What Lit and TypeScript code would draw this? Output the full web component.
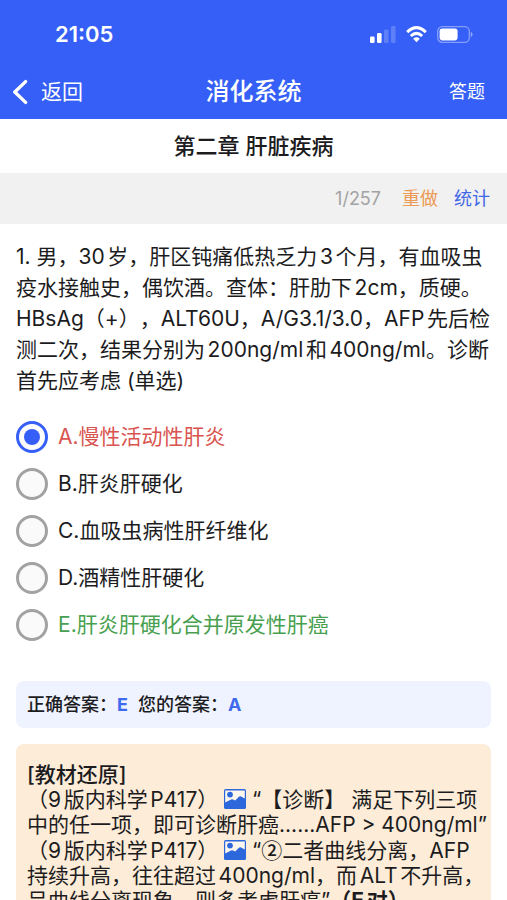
import { LitElement, html, css, svg } from "lit";
import { customElement, state } from "lit/decorators.js";
import { classMap } from "lit/directives/class-map.js";

interface Choice {
  key: string;
  text: string;
}

const CHOICES: Choice[] = [
  { key: "A", text: "慢性活动性肝炎" },
  { key: "B", text: "肝炎肝硬化" },
  { key: "C", text: "血吸虫病性肝纤维化" },
  { key: "D", text: "酒精性肝硬化" },
  { key: "E", text: "肝炎肝硬化合并原发性肝癌" },
];

const CORRECT = "E";

@customElement("status-bar")
class StatusBar extends LitElement {
  static styles = css`
    :host {
      display: flex;
      align-items: center;
      justify-content: space-between;
      height: 64px;
      padding: 4px 34px 0 55px;
      font-size: 22px;
      font-weight: 600;
    }
    .icons {
      display: flex;
      align-items: center;
      gap: 10px;
    }
    svg {
      display: block;
    }
  `;

  render() {
    return html`
      <span>21:05</span>
      <div class="icons">
        <svg width="26" height="17" viewBox="0 0 26 17" fill="#fff" aria-label="信号">
          <rect x="0" y="10.5" width="4.6" height="6.5" rx="1.3" />
          <rect x="7" y="7" width="4.6" height="10" rx="1.3" />
          <rect x="14" y="3.5" width="4.6" height="13.5" rx="1.3" opacity="0.2" />
          <rect x="21" y="0" width="4.6" height="17" rx="1.3" opacity="0.2" />
        </svg>
        <svg width="21" height="17" viewBox="0 0 21 17" aria-label="无线网络">
          <g fill="none" stroke="#fff" stroke-width="3">
            <path d="M1.2 6.2 Q10.5 -2.8 19.8 6.2" />
            <path d="M4.8 10 Q10.5 4.6 16.2 10" />
          </g>
          <path d="M7.2 12.7 Q10.5 9.8 13.8 12.7 L10.5 16.2 Z" fill="#fff" />
        </svg>
        <svg width="36" height="17" viewBox="0 0 36 17" aria-label="电池">
          <rect x="0.7" y="0.7" width="31.6" height="15.6" rx="4.6" fill="none" stroke="#fff" stroke-opacity="0.4" stroke-width="1.3" />
          <rect x="2.6" y="2.6" width="18" height="11.8" rx="2.8" fill="#fff" />
          <path d="M33.8 5.8 Q35.6 6.8 35.6 8.5 Q35.6 10.2 33.8 11.2 Z" fill="#fff" opacity="0.45" />
        </svg>
      </div>
    `;
  }
}

@customElement("app-root")
class AppRoot extends LitElement {
  @state() private selected = "A";

  static styles = css`
    :host {
      display: flex;
      flex-direction: column;
      height: 100vh;
      overflow: hidden;
      background: #fff;
      color: #1c1c1e;
      font-family: Inter, "Noto Sans CJK SC", sans-serif;
      font-size: 21px;
      text-autospace: normal;
      text-spacing-trim: space-all;
    }
    * {
      box-sizing: border-box;
    }
    button {
      padding: 0;
      border: 0;
      background: none;
      color: inherit;
      font: inherit;
      line-height: 22px;
      cursor: pointer;
    }
    header {
      flex: none;
      background: #355ff6;
      color: #fff;
    }
    nav {
      display: grid;
      grid-template-columns: 1fr auto 1fr;
      align-items: center;
      height: 55px;
      padding: 0 22px 0 12px;
    }
    .back {
      display: flex;
      align-items: center;
      gap: 13px;
      justify-self: start;
    }
    .page-title {
      margin: 0 0 0 10px;
      font-size: 24px;
      line-height: 30px;
      font-weight: 500;
    }
    .mode {
      justify-self: end;
      font-size: 18px;
    }
    main {
      flex: 1;
      min-height: 0;
      overflow-y: auto;
      scrollbar-width: none;
    }
    .chapter {
      margin: 0;
      font-size: 22px;
      line-height: 54px;
      font-weight: 500;
      text-align: center;
    }
    .tools {
      display: flex;
      align-items: center;
      justify-content: flex-end;
      height: 51px;
      padding: 0 17px;
      background: #f1f1f1;
      font-size: 18px;
      line-height: 22px;
    }
    .count {
      margin-right: 21px;
      color: #a3a3a3;
    }
    .redo {
      margin-right: 16px;
      color: #ec9a55;
    }
    .stats {
      color: #3f66e6;
    }
    .content {
      padding: 17px 16px 0;
    }
    .question {
      margin: 0;
      line-height: 31px;
    }
    fieldset {
      margin: 17px 0 0;
      padding: 0;
      border: 0;
      min-width: 0;
    }
    .choice {
      display: flex;
      align-items: center;
      gap: 10px;
      height: 47px;
      line-height: 22px;
      cursor: pointer;
    }
    .choice.wrong {
      color: #d9534f;
    }
    .choice.right {
      color: #489f50;
    }
    .choice input {
      flex: none;
      display: grid;
      place-items: center;
      width: 32px;
      height: 32px;
      margin: 0;
      appearance: none;
      border: 3px solid #a2a2a2;
      border-radius: 50%;
      background: #fafafa;
    }
    .choice input:checked {
      border-color: #355ff6;
      background: #fff;
    }
    .choice input:checked::before {
      content: "";
      width: 16px;
      height: 16px;
      border-radius: 50%;
      background: #355ff6;
    }
    .answers {
      display: flex;
      align-items: center;
      gap: 10px;
      height: 47px;
      margin-top: 33px;
      padding: 0 11px;
      border-radius: 8px;
      background: #eff3ff;
      font-size: 18px;
      line-height: 24px;
      font-weight: 500;
    }
    .answers b {
      color: #3f6af0;
      font-weight: 700;
    }
    .explain {
      margin-top: 16px;
      padding: 18px 4px 18px 11px;
      border-radius: 8px;
      background: #fdecd8;
      line-height: 25px;
    }
    .explain h2,
    .explain p {
      margin: 0;
      font-size: 21px;
    }
    .explain h2 {
      font-weight: 500;
    }
    .verdict {
      font-weight: 700;
    }
    .ordinal {
      font-family: "Noto Sans CJK SC", sans-serif;
      font-weight: 500;
    }
    .picture {
      vertical-align: -2px;
    }
  `;

  private picture() {
    return svg`
      <svg class="picture" width="22" height="20" viewBox="0 0 22 20" aria-label="图片">
        <rect x="0" y="0" width="22" height="20" rx="1.6" fill="#2c68dc" />
        <path d="M1.2 1.4 H20.8 V9.6 L16.6 7.2 Q15.6 7 14.9 7.8 L11.2 11.6 L9 10.4 Q8 10 7 10.6 L1.2 13.6 Z" fill="#fdf6ee" />
        <circle cx="6" cy="5.6" r="2.9" fill="#2c68dc" />
      </svg>
    `;
  }

  render() {
    return html`
      <header>
        <status-bar></status-bar>
        <nav>
          <button class="back">
            <svg width="16" height="26" viewBox="0 0 16 26" fill="none" stroke="#fff" stroke-width="3.4" stroke-linecap="round" stroke-linejoin="round" aria-hidden="true">
              <path d="M13.6 2.6 L2.8 13 L13.6 23.4" />
            </svg>
            <span>返回</span>
          </button>
          <h1 class="page-title">消化系统</h1>
          <button class="mode">答题</button>
        </nav>
      </header>
      <main>
        <h2 class="chapter">第二章 肝脏疾病</h2>
        <div class="tools">
          <span class="count">1/257</span>
          <button class="redo">重做</button>
          <button class="stats">统计</button>
        </div>
        <div class="content">
          <p class="question" id="question">
            1. 男，30岁，肝区钝痛低热乏力3个月，有血吸虫疫水接触史，偶饮酒。查体：肝肋下2cm，质硬。HBsAg（+），ALT60U，A/G3.1/3.0，AFP先后检测二次，结果分别为200ng/ml和400ng/ml。诊断首先应考虑 (单选)
          </p>
          <fieldset aria-labelledby="question">
            ${CHOICES.map(
              (c) => html`
                <label
                  class=${classMap({
                    choice: true,
                    right: c.key === CORRECT,
                    wrong: c.key === this.selected && c.key !== CORRECT,
                  })}
                >
                  <input
                    type="radio"
                    name="choice"
                    .value=${c.key}
                    .checked=${c.key === this.selected}
                    @change=${() => (this.selected = c.key)}
                  />
                  <span>${c.key}.${c.text}</span>
                </label>
              `
            )}
          </fieldset>
          <div class="answers">
            <span>正确答案：<b>${CORRECT}</b></span>
            <span>您的答案：<b>${this.selected}</b></span>
          </div>
          <section class="explain">
            <h2>[教材还原]</h2>
            <p>（9版内科学P417）${this.picture()}“【诊断】 满足下列三项中的任一项，即可诊断肝癌......AFP &gt; 400ng/ml”</p>
            <p>（9版内科学P417）${this.picture()}“<span class="ordinal">②</span>二者曲线分离，AFP持续升高，往往超过400ng/ml，而ALT不升高，呈曲线分离现象，则多考虑肝癌”<span class="verdict">（E对）</span></p>
          </section>
        </div>
      </main>
    `;
  }
}
